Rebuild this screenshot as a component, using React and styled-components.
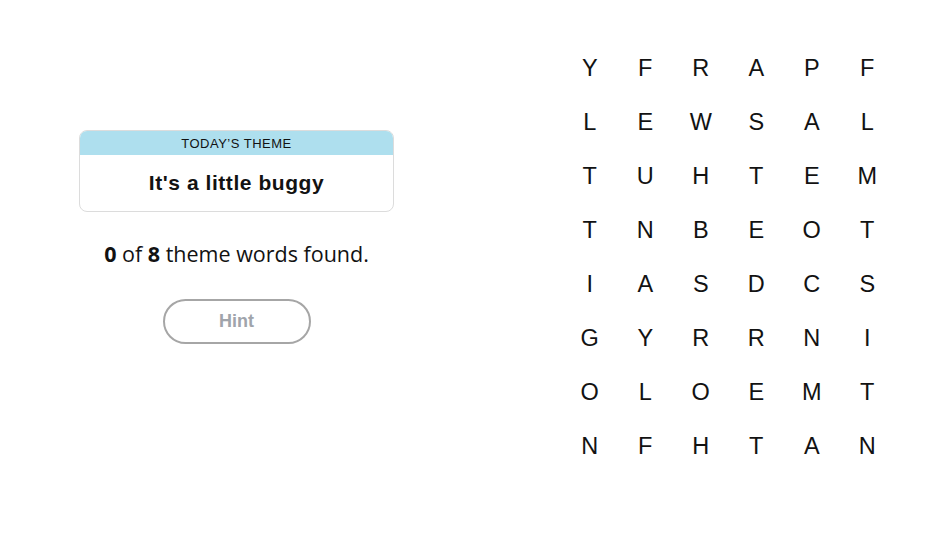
import React from "react";
import styled, { createGlobalStyle } from "styled-components";

const Global = createGlobalStyle`
  html, body { margin: 0; padding: 0; background: #fff; }
  body { font-family: "Liberation Sans", Arial, sans-serif; color: #121212; }
`;

const Page = styled.div`
  display: flex;
  width: 951px;
  height: 547px;
`;

const Left = styled.section`
  width: 473px;
  display: flex;
  flex-direction: column;
  align-items: center;
  padding-top: 130px;
  box-sizing: border-box;
`;

const Card = styled.div`
  width: 315px;
  border: 1px solid #dcdcdc;
  border-radius: 8px;
  overflow: hidden;
  box-sizing: border-box;
`;

const CardHeader = styled.div`
  background: #aedfee;
  height: 24px;
  display: flex;
  align-items: center;
  justify-content: center;
  font-size: 13px;
  letter-spacing: 0.5px;
  text-transform: uppercase;
  color: #121212;
`;

const CardTitle = styled.div`
  height: 56px;
  display: flex;
  align-items: center;
  justify-content: center;
  font-size: 21px;
  letter-spacing: 0.55px;
  font-weight: 700;
`;

const Progress = styled.p`
  margin: 29px 0 0;
  font-family: "Open Sans", "Liberation Sans", sans-serif;
  font-size: 21.5px;
  line-height: 26px;
  b { font-weight: 700; }
`;

const HintButton = styled.button`
  margin-top: 32px;
  width: 148px;
  height: 45px;
  border: 2px solid #a6a6a6;
  border-radius: 23px;
  background: #fff;
  color: #a0a4ab;
  font-family: inherit;
  font-size: 18px;
  font-weight: 700;
  cursor: default;
`;

const Right = styled.section`
  padding-top: 41px;
  padding-left: 89px;
`;

const Grid = styled.div`
  display: grid;
  grid-template-columns: repeat(6, 55.5px);
  grid-auto-rows: 54px;
`;

const Cell = styled.div`
  display: flex;
  align-items: center;
  justify-content: center;
  font-size: 23.5px;
  color: #121212;
`;

const letters = [
  "YFRAPF",
  "LEWSAL",
  "TUHTEM",
  "TNBEOT",
  "IASDCS",
  "GYRRNI",
  "OLOEMT",
  "NFHTAN",
];

export default function App() {
  return (
    <>
      <Global />
      <Page>
        <Left>
          <Card>
            <CardHeader>Today’s Theme</CardHeader>
            <CardTitle>It's a little buggy</CardTitle>
          </Card>
          <Progress>
            <b>0</b> of <b>8</b> theme words found.
          </Progress>
          <HintButton>Hint</HintButton>
        </Left>
        <Right>
          <Grid>
            {letters.map((row, r) =>
              row.split("").map((ch, c) => <Cell key={`${r}-${c}`}>{ch}</Cell>)
            )}
          </Grid>
        </Right>
      </Page>
    </>
  );
}
